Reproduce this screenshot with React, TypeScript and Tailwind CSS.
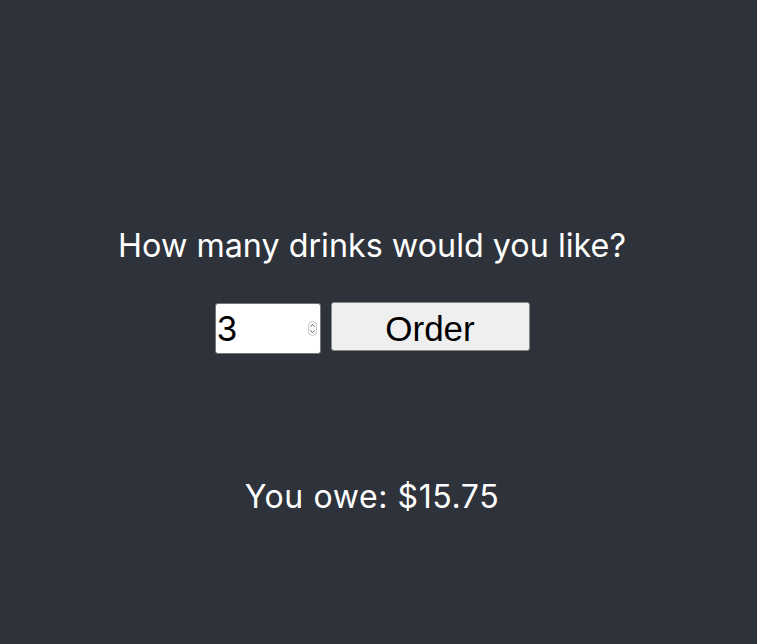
import React, { useState } from 'react';

const PRICE = 5.25;

export default function App() {
  const [count, setCount] = useState(3);
  const [owed, setOwed] = useState(15.75);

  return (
    <div
      className="min-h-screen w-full bg-[#2e323b] text-white"
      style={{ fontFamily: 'Inter, "Noto Sans", sans-serif' }}
    >
      <div className="w-[744px] flex flex-col items-center pt-[226px]">
        <h1 className="text-[32.3px] leading-[40px] font-normal">How many drinks would you like?</h1>

        <div className="flex items-start gap-[10px] mt-[36px]">
          <div className="relative mt-[1px]">
            <input
              type="number"
              value={count}
              onChange={(e) => setCount(Number(e.target.value))}
              className="w-[106px] h-[51px] bg-white text-black text-[34px] pl-[1px] border border-[#767676] rounded-[3px] [appearance:textfield] [&::-webkit-inner-spin-button]:appearance-none"
            />
            {/* spinner */}
            <svg
              className="absolute right-[4px] top-[18px] pointer-events-none"
              width="9"
              height="15"
              viewBox="0 0 9 15"
            >
              <rect x="0.5" y="0.5" width="8" height="14" rx="4" fill="#fafafa" stroke="#c8c8c8" />
              <path d="M2.5 5.5 L4.5 3.5 L6.5 5.5" fill="none" stroke="#555" strokeWidth="1" />
              <path d="M2.5 9.5 L4.5 11.5 L6.5 9.5" fill="none" stroke="#555" strokeWidth="1" />
            </svg>
          </div>
          <button
            onClick={() => setOwed(count * PRICE)}
            className="w-[199px] h-[49px] bg-[#efefef] text-black text-[35px] leading-none border border-[#8a8a8a] rounded-[3px] pt-[4px]"
            style={{ fontFamily: '"Liberation Sans", Arial, sans-serif' }}
          >
            Order
          </button>
        </div>

        <p className="text-[32px] leading-[40px] mt-[123px] tracking-[0.6px]">You owe: ${owed.toFixed(2)}</p>
      </div>
    </div>
  );
}
